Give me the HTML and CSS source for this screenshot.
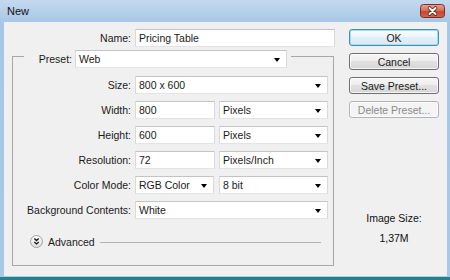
FILE: index.html
```html
<!DOCTYPE html>
<html>
<head>
<meta charset="utf-8">
<link rel="stylesheet" href="styles.css">
</head>
<body>
<div class="window">
  <div class="titlebar">
    <span class="title">New</span>
    <div class="close">
      <svg width="25" height="14" viewBox="0 0 25 14">
        <defs>
          <linearGradient id="cg" x1="0" y1="0" x2="0" y2="1">
            <stop offset="0" stop-color="#e9a496"/>
            <stop offset="0.45" stop-color="#d9705d"/>
            <stop offset="0.55" stop-color="#c9472f"/>
            <stop offset="1" stop-color="#d3654a"/>
          </linearGradient>
        </defs>
        <rect x="0.5" y="0.5" width="24" height="13" rx="3" fill="url(#cg)" stroke="#7a3025"/>
        <path d="M9.5 4 L15.5 10 M15.5 4 L9.5 10" stroke="#5a2019" stroke-width="3.6" stroke-linecap="round"/>
        <path d="M9.5 4 L15.5 10 M15.5 4 L9.5 10" stroke="#ffffff" stroke-width="2" stroke-linecap="round"/>
      </svg>
    </div>
  </div>
  <div class="client">
    <div class="main">
      <div class="name-row">
        <label>Name:</label>
        <div class="field">Pricing Table</div>
      </div>
      <div class="group">
        <div class="legend">
          <label>Preset:</label>
          <div class="select preset"><span>Web</span><i class="caret"></i></div>
        </div>
        <div class="grid">
          <label>Size:</label>
          <div class="select span2"><span>800 x 600</span><i class="caret"></i></div>

          <label>Width:</label>
          <div class="field">800</div>
          <div class="select"><span>Pixels</span><i class="caret"></i></div>

          <label>Height:</label>
          <div class="field">600</div>
          <div class="select"><span>Pixels</span><i class="caret"></i></div>

          <label>Resolution:</label>
          <div class="field">72</div>
          <div class="select"><span>Pixels/Inch</span><i class="caret"></i></div>

          <label>Color Mode:</label>
          <div class="select mode"><span>RGB Color</span><i class="caret"></i></div>
          <div class="select"><span>8 bit</span><i class="caret"></i></div>

          <label>Background Contents:</label>
          <div class="select span2"><span>White</span><i class="caret"></i></div>
        </div>
        <div class="advanced">
          <svg class="adv-icon" width="13" height="13" viewBox="0 0 13 13">
            <defs>
              <linearGradient id="ag" x1="0" y1="0" x2="0" y2="1">
                <stop offset="0" stop-color="#ffffff"/>
                <stop offset="1" stop-color="#dcdcdc"/>
              </linearGradient>
            </defs>
            <circle cx="6.5" cy="6.5" r="6" fill="url(#ag)" stroke="#a0a0a0"/>
            <path d="M4.3 3.6 L6.5 5.6 L8.7 3.6 M4.3 6.9 L6.5 8.9 L8.7 6.9" fill="none" stroke="#1a1a1a" stroke-width="1.3"/>
          </svg>
          <span class="adv-text">Advanced</span>
          <span class="adv-line"></span>
        </div>
      </div>
    </div>
    <div class="side">
      <div class="btn default">OK</div>
      <div class="btn">Cancel</div>
      <div class="btn">Save Preset...</div>
      <div class="btn disabled">Delete Preset...</div>
      <div class="imgsize">
        <div>Image Size:</div>
        <div>1,37M</div>
      </div>
    </div>
  </div>
</div>
</body>
</html>
```

FILE: styles.css
```css
html, body {
  margin: 0;
  padding: 0;
}

body {
  width: 450px;
  height: 280px;
  overflow: hidden;
  font-family: "Liberation Sans", Arial, sans-serif;
  font-size: 10.5px;
  color: #1a1a1a;
}

.window {
  width: 450px;
  height: 280px;
  box-sizing: border-box;
  padding: 0 3px 0 4px;
  background: linear-gradient(#c4d9ef 0, #a8c7e6 22px, #a9c8e6 100%);
  border-bottom: 3px solid #2a7d8f;
  display: flex;
  flex-direction: column;
}

.titlebar {
  height: 22px;
  flex: none;
  display: flex;
  justify-content: space-between;
  align-items: flex-start;
}

.title {
  font-size: 11px;
  line-height: 22px;
  padding-left: 3px;
  color: #111;
}

.close {
  margin-top: 4px;
  margin-right: 2px;
  height: 14px;
}

.close svg {
  display: block;
}

.client {
  flex: 1;
  display: flex;
  background: #f0f0f0;
  border-bottom: 1px solid #9fd3e3;
}

.main {
  width: 323px;
  padding: 7px 0 0 8px;
  flex: none;
}

label {
  text-align: right;
  white-space: nowrap;
}

.name-row {
  display: grid;
  grid-template-columns: 119px 200px;
  column-gap: 4px;
  height: 18px;
  align-items: center;
}

.field,
.select {
  height: 18px;
  box-sizing: border-box;
  background: #fff;
  border: 1px solid;
  border-color: #c4c4c4 #d9d9d9 #e4e4e4 #d9d9d9;
  padding: 0 3px;
  display: flex;
  align-items: center;
  white-space: nowrap;
}

.select span {
  flex: 1;
}

.caret {
  width: 0;
  height: 0;
  border-top: 4px solid #000;
  border-left: 3.5px solid transparent;
  border-right: 3.5px solid transparent;
  margin-right: 3px;
  margin-top: 1px;
}

.group {
  margin-top: 9px;
  width: 322px;
  box-sizing: border-box;
  border: 1px solid #a8a8a8;
  padding: 0 0 17px 0;
}

.legend {
  display: flex;
  align-items: center;
  width: fit-content;
  height: 18px;
  margin: -7px 0 0 11px;
  padding-right: 4px;
  background: #f0f0f0;
}

.legend label {
  width: 51px;
  box-sizing: border-box;
  padding-right: 3px;
}

.preset {
  width: 212px;
}

.grid {
  display: grid;
  grid-template-columns: 118px 80px 109px;
  grid-auto-rows: 18px;
  column-gap: 4px;
  row-gap: 7px;
  margin-top: 8px;
  align-items: center;
}

.span2 {
  grid-column: 2 / 4;
}

.mode {
  width: 79px;
}

.advanced {
  display: flex;
  align-items: center;
  height: 13px;
  margin: 16px 0 0 17px;
}

.adv-icon {
  display: block;
  flex: none;
}

.adv-text {
  margin-left: 5px;
}

.adv-line {
  flex: 1;
  height: 1px;
  background: #b2b2b2;
  margin: 1px 12px 0 5px;
}

.side {
  width: 90px;
  margin-left: 14px;
  padding-top: 7px;
  display: flex;
  flex-direction: column;
  gap: 7px;
}

.btn {
  height: 17px;
  box-sizing: border-box;
  border: 1px solid #707070;
  border-radius: 3px;
  background: linear-gradient(#f6f6f6 0%, #eeeeee 50%, #e1e1e1 50%, #d6d6d6 100%);
  box-shadow: inset 0 0 0 1px rgba(255, 255, 255, 0.7);
  display: flex;
  align-items: center;
  justify-content: center;
  white-space: nowrap;
}

.btn.default {
  border-color: #3c8fc4;
  box-shadow: inset 0 0 0 1px #a6ddf5;
  background: linear-gradient(#f7fbfe 0%, #eef6fb 50%, #e2eff7 50%, #d9e9f4 100%);
}

.btn.disabled {
  border-color: #b0b4b7;
  background: #f4f4f4;
  color: #8a8a8a;
}

.imgsize {
  margin-top: 87px;
  display: flex;
  flex-direction: column;
  gap: 7px;
  text-align: center;
  line-height: 13px;
  color: #111;
}
```
